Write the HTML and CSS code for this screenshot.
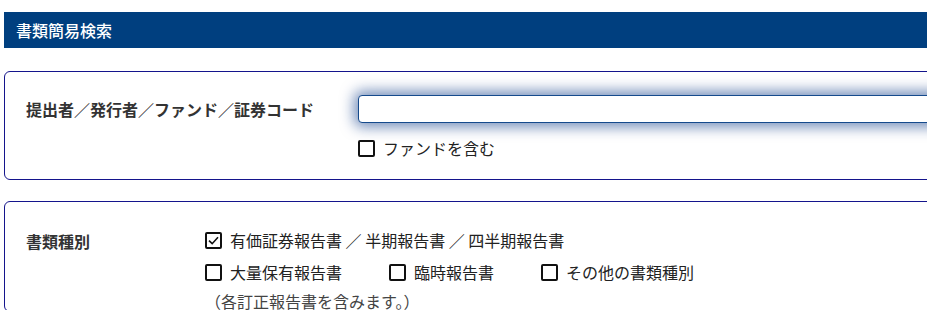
FILE: index.html
```html
<!DOCTYPE html>
<html lang="ja">
<head>
    <meta charset="UTF-8">
    <title>書類簡易検索</title>
    <link rel="stylesheet" href="styles.css">
</head>
<body>
    <div class="pagina">
        <h2 class="titulo">書類簡易検索</h2>

        <section class="painel painel-codigo">
            <div class="rotulo">提出者／発行者／ファンド／証券コード</div>
            <div class="campos">
                <input type="text" class="entrada">
                <label class="opcao"><span class="caixa"></span>ファンドを含む</label>
            </div>
        </section>

        <section class="painel painel-tipo">
            <div class="rotulo">書類種別</div>
            <div class="campos">
                <div class="linha">
                    <label class="opcao"><span class="caixa marcada"><svg viewBox="0 0 16 16" width="15" height="15"><path d="M3.2 8.2 L6.6 11.4 L12.8 4.6" fill="none" stroke="#111" stroke-width="1.7"/></svg></span>有価証券報告書 ／ 半期報告書 ／ 四半期報告書</label>
                </div>
                <div class="linha">
                    <label class="opcao"><span class="caixa"></span>大量保有報告書</label>
                    <label class="opcao"><span class="caixa"></span>臨時報告書</label>
                    <label class="opcao"><span class="caixa"></span>その他の書類種別</label>
                </div>
                <p class="nota">（各訂正報告書を含みます。）</p>
            </div>
        </section>
    </div>
</body>
</html>
```

FILE: styles.css
```css
body { margin: 0; overflow: hidden; background: #fff; font-family: "Noto Sans CJK JP", "Noto Sans", sans-serif; font-size: 16px; color: #222; }
.pagina { width: 1000px; padding: 12px 0 0 4px; }
.titulo { margin: 0; height: 36px; line-height: 36px; padding-left: 12px; background: #003f7f; color: #fff; font-size: 16px; font-weight: 500; }
.painel { display: grid; border: 1px solid #14148c; border-radius: 6px; }
.painel-codigo { margin-top: 23px; grid-template-columns: 332px 1fr; padding: 23px 0 21px 21px; align-items: start; }
.painel-tipo { margin-top: 21px; grid-template-columns: 179px 1fr; padding: 28px 0 0 21px; }
.rotulo { font-weight: bold; color: #333; line-height: 20px; }
.painel-codigo .rotulo { margin-top: 4px; }
.painel-tipo .rotulo { margin-top: 1px; }
.entrada { display: block; box-sizing: border-box; width: 100%; height: 28px; margin: 0; border: 1px solid #154a8c; border-radius: 4px; box-shadow: 0 0 14px 4px rgba(0, 50, 130, 0.55); outline: none; }
.painel-codigo .opcao { margin-top: 15px; }
.opcao { display: flex; align-items: center; gap: 8px; line-height: 20px; }
.caixa { box-sizing: border-box; width: 17px; height: 17px; border: 2px solid #111; border-radius: 2px; display: flex; align-items: center; justify-content: center; }
.caixa svg { flex: none; }
.linha { display: flex; gap: 47px; margin-bottom: 12px; }
.nota { margin: -3px 0 0; line-height: 20px; color: #444; }
```
